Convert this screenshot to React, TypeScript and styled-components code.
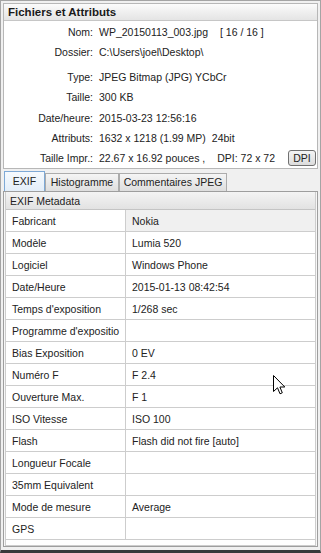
import React from 'react';
import styled, { createGlobalStyle } from 'styled-components';

const GlobalStyle = createGlobalStyle`
  body {
    margin: 0;
    background: #ffffff;
  }
`;

const Window = styled.div`
  position: relative;
  width: 321px;
  height: 553px;
  box-sizing: border-box;
  border: 1px solid #a4a4a4;
  border-bottom: 3px solid #3a3a3a;
  padding: 2px 2px 3px 2px;
  display: flex;
  flex-direction: column;
  background: #f0f0f0;
  font-family: "Liberation Sans", Arial, sans-serif;
  color: #222;
`;

const InfoPanel = styled.div`
  border: 1px solid #b7b7b7;
  background: #fff;
`;

const TitleBar = styled.div`
  height: 16px;
  line-height: 17px;
  padding-left: 4px;
  font-size: 11.5px;
  font-weight: bold;
  color: #1a1a1a;
  background: linear-gradient(#fbfbfb, #e4e4e4);
  border-bottom: 1px solid #c6c6c6;
`;

const InfoRow = styled.div<{ $space?: number }>`
  display: grid;
  grid-template-columns: 89px 1fr;
  column-gap: 6px;
  align-items: center;
  height: 20px;
  margin-top: ${p => p.$space ?? 0}px;
  font-size: 10.5px;
`;

const InfoLabel = styled.div`
  text-align: right;
`;

const InfoValue = styled.div`
  display: flex;
  align-items: center;
  white-space: nowrap;
`;

const Spaced = styled.span<{ $left: number }>`
  margin-left: ${p => p.$left}px;
`;

const DpiButton = styled.button`
  margin-left: auto;
  margin-right: 1px;
  height: 16px;
  width: 28px;
  padding: 0;
  font-family: inherit;
  font-size: 10.5px;
  color: #222;
  border: 1px solid #707070;
  border-radius: 3px;
  background: linear-gradient(#f4f4f4, #dcdcdc);
`;

const TabStrip = styled.div`
  display: flex;
  align-items: flex-end;
  height: 20px;
  margin-top: 2px;
  padding-left: 1px;
`;

const Tab = styled.div<{ $active?: boolean; $width: number }>`
  box-sizing: border-box;
  width: ${p => p.$width}px;
  height: ${p => (p.$active ? 20 : 18)}px;
  line-height: ${p => (p.$active ? 19 : 17)}px;
  text-align: center;
  font-size: 10.5px;
  border: 1px solid ${p => (p.$active ? '#7ea9d6' : '#acacac')};
  border-bottom: none;
  background: ${p =>
    p.$active
      ? 'linear-gradient(#f6fafe, #e3eef9)'
      : 'linear-gradient(#f5f5f5, #dedede)'};
`;

const TabPanel = styled.div`
  flex: 1;
  display: flex;
  flex-direction: column;
  border: 1px solid #9e9e9e;
  padding: 0 1px;
  background: #f7f7f7;
`;

const GridBox = styled.div`
  flex: 1;
  border-left: 1px solid #cdcdcd;
  border-right: 1px solid #cdcdcd;
  border-bottom: 1px solid #cdcdcd;
  background: #fff;
`;

const MetaHeader = styled.div`
  height: 17px;
  line-height: 18px;
  padding-left: 4px;
  font-size: 10.5px;
  background: linear-gradient(#f4f4f4, #e2e2e2);
  border-bottom: 1px solid #c4c4c4;
`;

const MetaRow = styled.div`
  display: grid;
  grid-template-columns: 120px 1fr;
  height: 22px;
  box-sizing: border-box;
  border-bottom: 1px solid #cdcdcd;
  font-size: 10.5px;
`;

const Cell = styled.div<{ $key?: boolean; $selected?: boolean }>`
  display: flex;
  align-items: center;
  padding-left: 6px;
  white-space: nowrap;
  overflow: hidden;
  border-right: ${p => (p.$key ? '1px solid #cdcdcd' : 'none')};
  background: ${p => (p.$selected ? '#f0f0f0' : 'transparent')};
`;

const Cursor = styled.svg`
  position: absolute;
  left: 272px;
  top: 374px;
`;

const metadata: [string, string][] = [
  ['Fabricant', 'Nokia'],
  ['Modèle', 'Lumia 520'],
  ['Logiciel', 'Windows Phone'],
  ['Date/Heure', '2015-01-13 08:42:54'],
  ["Temps d'exposition", '1/268 sec'],
  ["Programme d'expositio", ''],
  ['Bias Exposition', '0 EV'],
  ['Numéro F', 'F 2.4'],
  ['Ouverture Max.', 'F 1'],
  ['ISO Vitesse', 'ISO 100'],
  ['Flash', 'Flash did not fire [auto]'],
  ['Longueur Focale', ''],
  ['35mm Equivalent', ''],
  ['Mode de mesure', 'Average'],
  ['GPS', ''],
];

const App = () => {
  return (
    <>
      <GlobalStyle />
      <Window>
        <InfoPanel>
          <TitleBar>Fichiers et Attributs</TitleBar>
          <InfoRow $space={1}>
            <InfoLabel>Nom:</InfoLabel>
            <InfoValue>
              WP_20150113_003.jpg<Spaced $left={12}>[ 16 / 16 ]</Spaced>
            </InfoValue>
          </InfoRow>
          <InfoRow>
            <InfoLabel>Dossier:</InfoLabel>
            <InfoValue>C:\Users\joel\Desktop\</InfoValue>
          </InfoRow>
          <InfoRow $space={5}>
            <InfoLabel>Type:</InfoLabel>
            <InfoValue>JPEG Bitmap (JPG) YCbCr</InfoValue>
          </InfoRow>
          <InfoRow>
            <InfoLabel>Taille:</InfoLabel>
            <InfoValue>300 KB</InfoValue>
          </InfoRow>
          <InfoRow $space={1}>
            <InfoLabel>Date/heure:</InfoLabel>
            <InfoValue>2015-03-23 12:56:16</InfoValue>
          </InfoRow>
          <InfoRow>
            <InfoLabel>Attributs:</InfoLabel>
            <InfoValue>
              1632 x 1218 (1.99 MP)<Spaced $left={6}>24bit</Spaced>
            </InfoValue>
          </InfoRow>
          <InfoRow>
            <InfoLabel>Taille Impr.:</InfoLabel>
            <InfoValue>
              22.67 x 16.92 pouces ,<Spaced $left={12}>DPI: 72 x 72</Spaced>
              <DpiButton>DPI</DpiButton>
            </InfoValue>
          </InfoRow>
        </InfoPanel>

        <TabStrip>
          <Tab $active $width={41}>EXIF</Tab>
          <Tab $width={74}>Histogramme</Tab>
          <Tab $width={108}>Commentaires JPEG</Tab>
        </TabStrip>

        <TabPanel>
          <GridBox>
            <MetaHeader>EXIF Metadata</MetaHeader>
            {metadata.map(([key, value], index) => (
              <MetaRow key={key}>
                <Cell $key>{key}</Cell>
                <Cell $selected={index === 0}>{value}</Cell>
              </MetaRow>
            ))}
          </GridBox>
        </TabPanel>

        <Cursor width="13" height="20" viewBox="0 0 13 20">
          <path
            d="M0.5 0.5 L0.5 16.5 L4.5 12.8 L7 18.8 L9.3 17.8 L6.9 12 L11.8 12 Z"
            fill="#fff"
            stroke="#000"
            strokeWidth="1"
            strokeLinejoin="miter"
          />
        </Cursor>
      </Window>
    </>
  );
};

export default App;
